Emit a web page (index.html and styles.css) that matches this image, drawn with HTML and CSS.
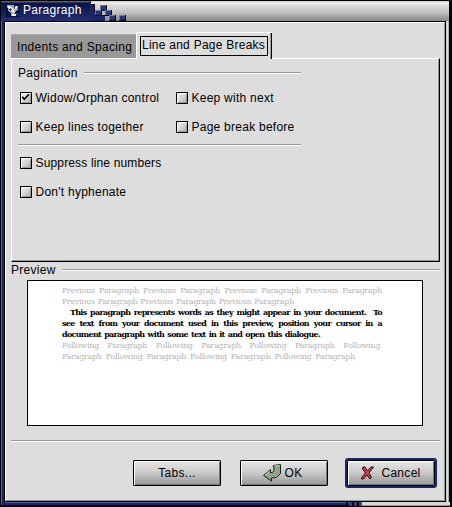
FILE: index.html
```html
<!DOCTYPE html>
<html lang="en">
<head>
<meta charset="utf-8">
<title>Paragraph</title>
<link rel="stylesheet" href="styles.css">
</head>
<body>
<div class="window">
  <header class="titlebar">
    <div class="caption">
      <svg class="app-icon" width="13" height="13" viewBox="0 0 13 13" shape-rendering="crispEdges">
        <path fill="#08103c" d="M0 0h13v13H0z"/>
        <path fill="#9ba5bd" d="M1 1h4l2 2 2-1h3v4L9 8v4H5V9L2 7z"/>
        <path fill="#fff" d="M2 2l3 1 2 2 4-3-1 4-3 3-2-2-3-3zM6 10h4v2H6z"/>
        <path fill="#b59b58" d="M5 1h3v2H6zM8 7l2-3v3z"/>
        <path fill="#33406d" d="M4 4l2 1-1 2-2-1zM8 2h1v3H8zM10 9h2v3h-1z"/>
      </svg>
      <span class="caption-text">Paragraph</span>
    </div>
    <svg class="steps" width="40" height="20" viewBox="0 0 40 20" shape-rendering="crispEdges">
      <defs>
        <g id="step"><path fill="#03061e" d="M0 0h7v6H0z"/><path fill="#6878ad" d="M0 0h6v5H0z"/><path fill="#273577" d="M1 1h5v4H1z"/></g>
      </defs>
      <path fill="#1b2663" d="M0 0h1v4h4v5h5v5h5v6H0z"/>
      <path fill="#050927" d="M0 3h5v1H0zM4 4h1v6H4zM5 9h5v1H5zM9 10h1v5H9zM10 14h5v1h-5z"/>
      <use href="#step" x="10" y="4"/><use href="#step" x="5" y="9"/><use href="#step" x="15" y="9"/>
      <use href="#step" x="19" y="14"/><use href="#step" x="29" y="14"/>
    </svg>
  </header>
  <main class="content">
    <nav class="tabs">
      <div class="tab">Indents and Spacing</div>
      <div class="tab selected"><span class="tab-focus">Line and Page Breaks</span></div>
    </nav>
    <section class="panel">
      <div class="legend legend-pagination"><span>Pagination</span><i class="rule"></i></div>
      <div class="options">
        <label class="check"><svg class="box" width="12" height="12" viewBox="0 0 12 12"><path d="M1.500 4.500l2.500 3 5.500-6" fill="none" stroke="#000" stroke-width="2"/></svg>Widow/Orphan control</label>
        <label class="check"><i class="box"></i>Keep with next</label>
        <label class="check"><i class="box"></i>Keep lines together</label>
        <label class="check"><i class="box"></i>Page break before</label>
      </div>
      <i class="rule divider"></i>
      <div class="extras">
        <label class="check snug"><i class="box"></i>Suppress line numbers</label>
        <label class="check"><i class="box"></i>Don't hyphenate</label>
      </div>
    </section>
    <div class="legend legend-preview"><span>Preview</span><i class="rule"></i></div>
    <section class="preview">
      <p class="line faint w320">Previous Paragraph Previous Paragraph Previous Paragraph Previous Paragraph</p>
      <p class="line faint w232">Previous Paragraph Previous Paragraph Previous Paragraph</p>
      <p class="line indent">This paragraph represents words as they might appear in your document.&nbsp; To</p>
      <p class="line w320">see text from your document used in this preview, position your cursor in a</p>
      <p class="line w258">document paragraph with some text in it and open this dialogue.</p>
      <p class="line faint w318">Following Paragraph Following Paragraph Following Paragraph Following</p>
      <p class="line faint w293">Paragraph Following Paragraph Following Paragraph Following Paragraph</p>
    </section>
    <i class="rule footer-rule"></i>
    <footer class="actions">
      <div class="button">Tabs...</div>
      <div class="button">
        <svg class="ok-icon" width="20" height="18" viewBox="0 0 20 18"><path d="M11.500 1.500l7-1v9l-4 4-5 .5v3L1.500 11.500l7-6v3h2l1.500-2z" fill="#91a487" stroke="#172016"/><path d="M12.500 2l5-.5M3 11l5-4" stroke="#c7d3bf" fill="none"/></svg>
        <span>OK</span>
      </div>
      <div class="button default">
        <svg class="cancel-icon" width="13" height="14" viewBox="0 0 13 14"><path d="M2 1h2l2.500 4L10 1h2.500L8 7l2.500 4.500L9 13 6 9l-3.500 4H.5L1 11l3.500-4L1.500 3z" fill="#c1444d" stroke="#35080d"/></svg>
        <span>Cancel</span>
      </div>
    </footer>
  </main>
  <svg class="bottom-steps" width="104" height="4" viewBox="0 0 104 4" shape-rendering="crispEdges">
    <path fill="#d8d8d8" d="M16 0h88v3H16z"/><path fill="#999" d="M16 3h88v1H16z"/>
    <path fill="#030620" d="M0 0h2v4H0zM6 0h2v4H6zM11 0h2v4h-2z"/><path fill="#35447f" d="M3 0h3v4H3zM8 0h3v4H8zM13 0h3v4h-3z"/>
  </svg>
</div>
</body>
</html>
```
FILE: styles.css
```css
* { box-sizing: border-box; }
body {
  margin: 0;
  width: 452px;
  height: 507px;
  overflow: hidden;
  background: #000;
  font: 12px/14px "Liberation Sans", Arial, sans-serif;
  letter-spacing: .3px;
  color: #000;
}
p { margin: 0; }
svg { display: block; flex: none; }
.window {
  position: relative;
  width: 450px;
  height: 506px;
  padding: 1px 3px 4px 4px;
  border-left: 1px solid #000;
  background:
    linear-gradient(#000, #000) 3px 21px / 442px 481px no-repeat,
    linear-gradient(90deg, #aaa, #eee 40%, #999) 445px 1px / 3px 504px no-repeat,
    linear-gradient(90deg, #56639b 0 1px, #1b2569 1px 3px, #10184e 3px 4px) 0 20px / 4px 485px no-repeat,
    linear-gradient(#56639b 0 1px, #1b2569 1px 3px, #050924 3px) 0 502px / 449px 4px no-repeat,
    #000;
}
.titlebar {
  display: flex;
  width: 448px;
  height: 20px;
  margin-left: -4px;
  background: linear-gradient(#d8c9d0 0, #efe9ed 2px, #d8d8d8 5px, #c8c8c8 10px, #a9a9a9 15px, #858585 20px);
}
.caption {
  display: flex;
  width: 89px;
  padding: 3px 0 0 5px;
  color: #fff;
  background: linear-gradient(#4d5a91 0 1px, #0b1342 2px, #17205c 12px, #26316e);
}
.caption-text { margin: 0 0 0 4px; line-height: 13px; }
.content {
  width: 440px;
  height: 479px;
  margin-top: 1px;
  padding: 9px 0 0 5px;
  background: #ddd;
  border: 1px solid #fff;
  border-right-color: #949994;
  border-bottom-color: #949994;
}
.tabs { display: flex; align-items: flex-end; height: 26px; }
.tab {
  width: 125px;
  height: 24px;
  padding: 5px 0 0 6px;
  background: #999;
  border-top: 1px solid #aaa;
  white-space: nowrap;
}
.tab.selected {
  position: relative;
  width: 136px;
  height: 27px;
  margin-bottom: -1px;
  padding: 3px 0 0 3px;
  background: #ddd;
  border: solid #fff;
  border-width: 1px 0 0 1px;
  box-shadow: inset -1px 0 #000, inset -2px 0 #999;
}
.tab-focus { display: block; width: 128px; height: 20px; padding: 1px 0 0 1px; border: 1px solid #000; letter-spacing: .25px; }
.panel {
  width: 429px;
  height: 204px;
  padding: 7px 0 0 6px;
  border: 1px solid #fff;
  border-right-color: #000;
  border-bottom-color: #000;
  box-shadow: inset -1px -1px #949994;
}
.legend { display: flex; align-items: center; height: 14px; gap: 6px; }
.legend-pagination { width: 283px; }
.legend-preview { width: 429px; padding-top: 1px; }
.rule { flex: 1; height: 2px; background: linear-gradient(#999 50%, #fff 50%); }
.options { display: grid; grid-template-columns: 156px 126px; grid-template-rows: 29px 29px; margin: 8px 0 0 2px; }
.check { display: flex; align-items: center; gap: 3.500px; height: 20px; letter-spacing: .25px; white-space: nowrap; }
.check.snug { letter-spacing: .15px; }
.box {
  flex: none;
  width: 12px;
  height: 12px;
  margin-top: -1px;
  border: 1px solid #000;
  background: linear-gradient(135deg, #f3f3f3, #ccd0cc 60%, #aaa);
  box-shadow: inset 1px 1px #fff, inset -1px -1px #999;
}
.divider { display: block; width: 283px; margin: -2px 0 7px; }
.extras { display: grid; grid-template-rows: 29px 29px; padding-left: 2px; }
.preview {
  width: 396px;
  height: 146px;
  margin: 4px 0 0 16px;
  padding: 4px 0 0 34px;
  background: #fff;
  border: 1px solid #000;
  font: bold 8px/11px "DejaVu Serif", serif;
  letter-spacing: -.7px;
}
.line { height: 11px; text-align: justify; text-align-last: justify; }
.faint { color: #b4b4b4; font-weight: normal; letter-spacing: -.3px; white-space: nowrap; }
.w320 { width: 320px; }
.w232 { width: 232px; }
.w258 { width: 258px; }
.w318 { width: 318px; }
.w293 { width: 293px; }
.indent { width: 312px; margin-left: 8px; }
.footer-rule { display: block; width: 429px; margin-top: 14px; }
.actions { display: flex; gap: 19px; margin: 18px 0 0 122px; }
.button {
  display: flex;
  align-items: center;
  justify-content: center;
  gap: 3px;
  width: 88px;
  height: 26px;
  border: 1px solid #000;
  border-radius: 1px;
  background: linear-gradient(#e6e6e6, #ccc 45%, #999);
  box-shadow: inset 1px 1px #fff, inset -1px -1px #777;
}
.button:nth-child(2) { padding-right: 4px; }
.button.default { gap: 7px; outline: 2px solid #1b2569; }
.bottom-steps { position: absolute; left: 345px; bottom: 0; }
```
